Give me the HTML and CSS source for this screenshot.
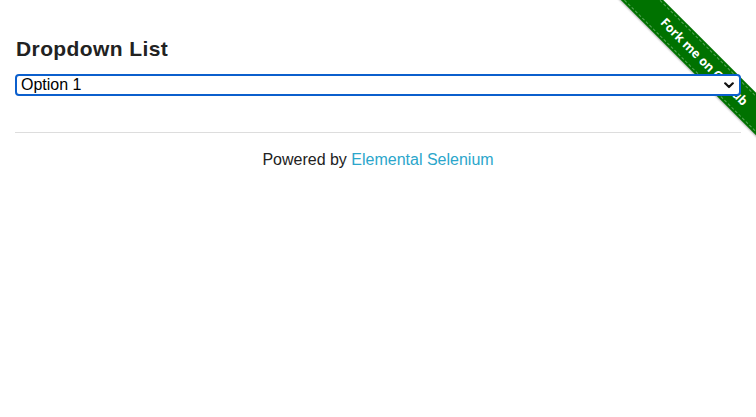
FILE: index.html
```html
<!DOCTYPE html>
<html lang="en">
<head>
<meta charset="utf-8">
<title>The Internet</title>
<link rel="stylesheet" href="styles.css">
</head>
<body>
<a class="ribbon" href="#"><span class="ribbon-band"><span class="ribbon-text">Fork me on GitHub</span></span></a>
<div class="page">
  <div class="example">
    <h3 class="title">Dropdown List</h3>
    <div class="select-wrap">
      <select class="dropdown">
        <option>Option 1</option>
        <option>Option 2</option>
      </select>
      <svg class="chevron" width="10" height="7" viewBox="0 0 10 7"><path d="M1.2 1.3 L5 5 L8.8 1.3" fill="none" stroke="#111" stroke-width="2.2" stroke-linecap="round" stroke-linejoin="round"/></svg>
    </div>
  </div>
  <hr class="rule">
  <div class="footer">Powered by <a class="footer-link" href="#">Elemental Selenium</a></div>
</div>
</body>
</html>
```
FILE: styles.css
```css
html {
  margin: 0;
  padding: 0;
  background: #fff;
}
body {
  margin: 0;
  padding: 0;
  font-family: "Liberation Sans", Arial, sans-serif;
  color: #222;
  font-size: 16px;
}
.page {
  padding: 0 15px;
}
.title {
  margin: 36px 0 0 1px;
  font-size: 21px;
  line-height: 25px;
  font-weight: bold;
  letter-spacing: 0.4px;
  color: #222;
}
.select-wrap {
  position: relative;
  margin-top: 13px;
  width: 726px;
  height: 22px;
}
.dropdown {
  appearance: none;
  -webkit-appearance: none;
  display: block;
  width: 726px;
  height: 22px;
  box-sizing: border-box;
  margin: 0;
  border: 2px solid #0b5fcd;
  border-radius: 4px;
  background: #fff;
  padding: 0 0 0 4px;
  font-family: "Liberation Sans", Arial, sans-serif;
  font-size: 16px;
  line-height: 18px;
  color: #000;
  outline: none;
}
.chevron {
  position: absolute;
  right: 7px;
  top: 8px;
  pointer-events: none;
}
.rule {
  margin: 36px 0 0;
  border: 0;
  border-top: 1px solid #ddd;
  height: 0;
}
.footer {
  margin-top: 17px;
  text-align: center;
  font-size: 16px;
  line-height: 20px;
  color: #222;
}
.footer-link {
  color: #2ba6cb;
  text-decoration: none;
}
.ribbon {
  position: absolute;
  top: 0;
  right: 0;
  width: 149px;
  height: 149px;
  overflow: hidden;
  z-index: -1;
  text-decoration: none;
}
.ribbon-band {
  position: absolute;
  left: -18px;
  top: 47px;
  width: 230px;
  height: 30px;
  background: #007200;
  transform: rotate(45deg);
  display: flex;
  align-items: center;
  justify-content: center;
  box-shadow: 0 1px 2px rgba(0,0,0,0.3);
}
.ribbon-text {
  display: block;
  width: 100%;
  box-sizing: border-box;
  text-align: center;
  border-top: 1px dashed rgba(255,255,255,0.35);
  border-bottom: 1px dashed rgba(255,255,255,0.35);
  padding: 4px 0 4px;
  font-size: 12.5px;
  line-height: 16px;
  font-weight: bold;
  color: #fff;
  font-family: "Open Sans", "Liberation Sans", sans-serif;
}
```
